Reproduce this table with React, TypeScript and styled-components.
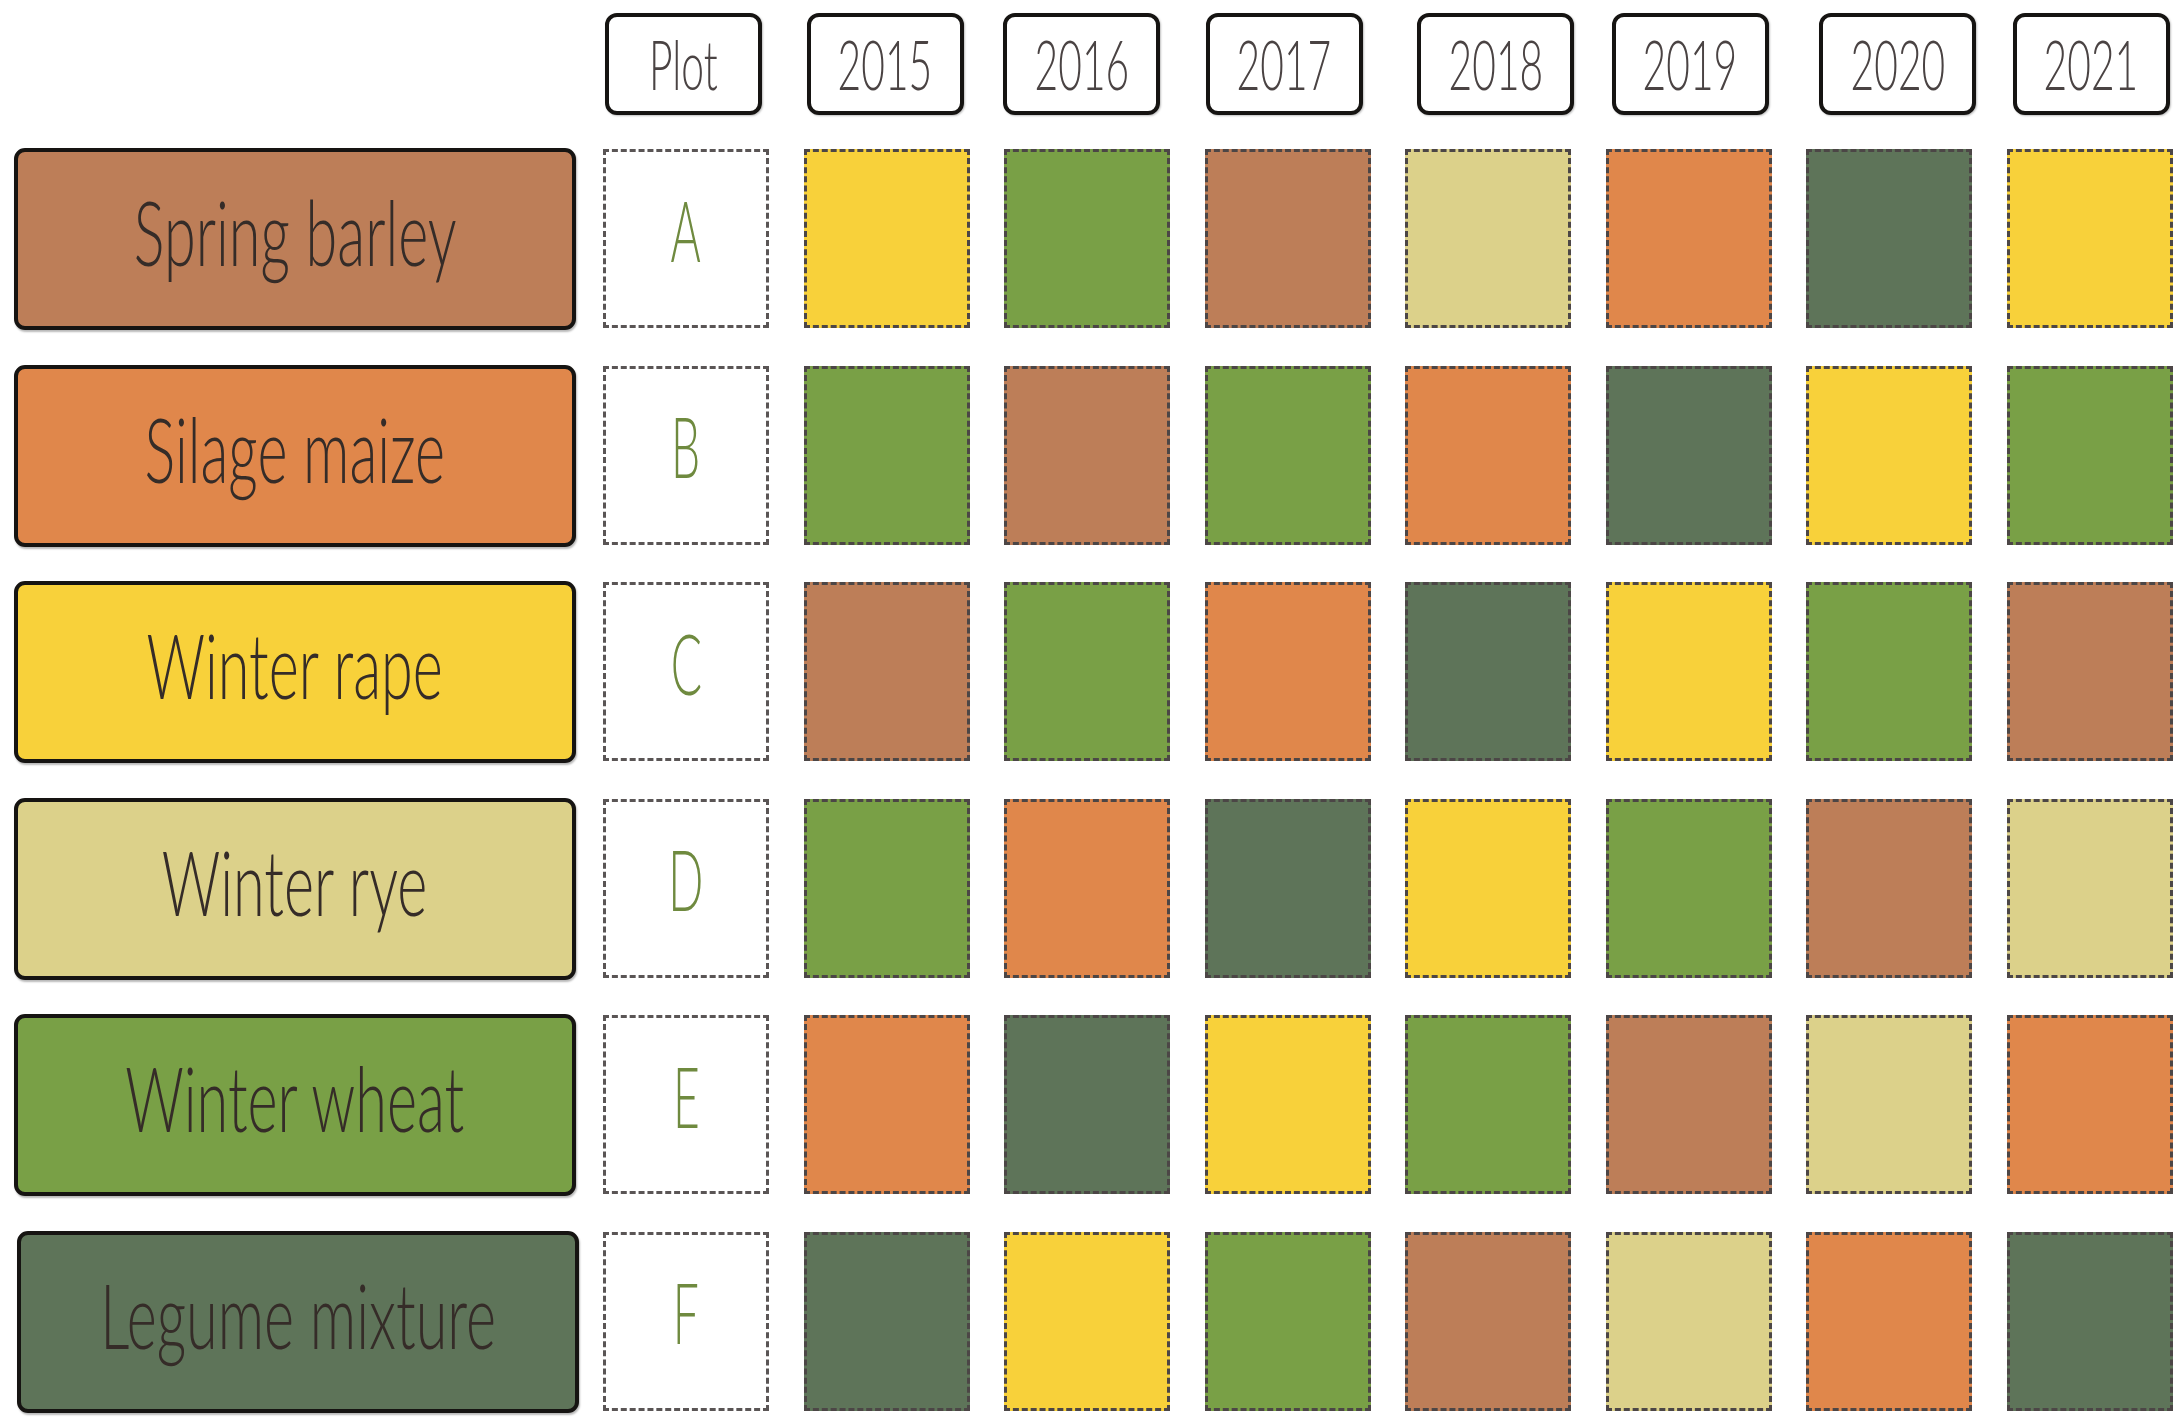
import React from "react";
import styled, { createGlobalStyle } from "styled-components";

const GlobalStyle = createGlobalStyle`
  html, body {
    margin: 0;
    padding: 0;
    background: #ffffff;
  }
  body {
    font-family: "Lato", "Open Sans", sans-serif;
  }
`;

type CropKey = "brown" | "orange" | "yellow" | "pale" | "green" | "dark";

const COLORS: Record<CropKey, string> = {
  brown: "#bd7e58",
  orange: "#e0874b",
  yellow: "#f8d13a",
  pale: "#dcd18a",
  green: "#79a046",
  dark: "#5e7459",
};

const CROPS: { name: string; key: CropKey; shift: number }[] = [
  { name: "Spring barley", key: "brown", shift: 0 },
  { name: "Silage maize", key: "orange", shift: 0 },
  { name: "Winter rape", key: "yellow", shift: 0 },
  { name: "Winter rye", key: "pale", shift: 0 },
  { name: "Winter wheat", key: "green", shift: 0 },
  { name: "Legume mixture", key: "dark", shift: 3 },
];

const HEADERS: { label: string; shift: number }[] = [
  { label: "Plot", shift: 2 },
  { label: "2015", shift: 3 },
  { label: "2016", shift: -1 },
  { label: "2017", shift: 1 },
  { label: "2018", shift: 12 },
  { label: "2019", shift: 6 },
  { label: "2020", shift: 13 },
  { label: "2021", shift: 6 },
];

const PLOTS: { id: string; rotation: CropKey[] }[] = [
  { id: "A", rotation: ["yellow", "green", "brown", "pale", "orange", "dark", "yellow"] },
  { id: "B", rotation: ["green", "brown", "green", "orange", "dark", "yellow", "green"] },
  { id: "C", rotation: ["brown", "green", "orange", "dark", "yellow", "green", "brown"] },
  { id: "D", rotation: ["green", "orange", "dark", "yellow", "green", "brown", "pale"] },
  { id: "E", rotation: ["orange", "dark", "yellow", "green", "brown", "pale", "orange"] },
  { id: "F", rotation: ["dark", "yellow", "green", "brown", "pale", "orange", "dark"] },
];

const ROW_H = 179;
const ROW_GAP = 37.6;
const HEAD_H = 102;
const HEAD_GAP = 34;
const COL_W = 166;
const COL_GAP = 34.5;

const Page = styled.div`
  display: flex;
  align-items: flex-start;
  padding: 13px 0 0 14px;
  width: 2184px;
  height: 1428px;
  box-sizing: border-box;
  overflow: hidden;
`;

const Legend = styled.div`
  display: flex;
  flex-direction: column;
  gap: ${ROW_GAP}px;
  width: 562px;
  padding-top: ${HEAD_H + HEAD_GAP}px;
`;

const CropLabel = styled.div<{ $bg: string; $shift: number }>`
  width: 562px;
  height: ${ROW_H + 3}px;
  margin: -1px 0 -2px ${(p) => p.$shift}px;
  box-sizing: border-box;
  background: ${(p) => p.$bg};
  border: 4px solid #161412;
  border-radius: 11px;
  box-shadow: 1px 2px 2px rgba(0, 0, 0, 0.28);
  display: flex;
  align-items: center;
  justify-content: center;
  overflow: hidden;
`;

const CropName = styled.span`
  display: inline-block;
  font-family: "Lato", sans-serif;
  font-weight: 300;
  font-size: 90px;
  line-height: 1;
  color: #352c28;
  white-space: nowrap;
  transform: translateY(-8px) scaleX(0.64);
`;

const Board = styled.div`
  margin-left: 27px;
  display: flex;
  flex-direction: column;
  gap: ${HEAD_GAP}px;
`;

const HeaderRow = styled.div`
  display: grid;
  grid-template-columns: repeat(8, ${COL_W}px);
  column-gap: ${COL_GAP}px;
  height: ${HEAD_H}px;
`;

const CellGrid = styled.div`
  display: grid;
  grid-template-columns: repeat(8, ${COL_W}px);
  grid-auto-rows: ${ROW_H}px;
  column-gap: ${COL_GAP}px;
  row-gap: ${ROW_GAP}px;
`;

const HeaderBox = styled.div<{ $shift: number }>`
  width: 157px;
  height: ${HEAD_H}px;
  margin-left: ${(p) => p.$shift}px;
  box-sizing: border-box;
  border: 4px solid #161412;
  border-radius: 12px;
  background: #ffffff;
  box-shadow: 1px 1px 2px rgba(0, 0, 0, 0.25);
  display: flex;
  align-items: center;
  justify-content: center;
`;

const HeaderText = styled.span`
  display: inline-block;
  font-family: "Lato", sans-serif;
  font-weight: 300;
  font-size: 68px;
  line-height: 1;
  color: #4a4343;
  transform: scaleX(0.6);
`;

const PlotCell = styled.div`
  box-sizing: border-box;
  border: 3px dashed #5a5555;
  background: #ffffff;
  display: flex;
  align-items: center;
  justify-content: center;
`;

const PlotLetter = styled.span`
  display: inline-block;
  font-family: "Lato", sans-serif;
  font-weight: 300;
  font-size: 84px;
  line-height: 1;
  color: #6f8a3f;
  transform: translateY(-9px) scaleX(0.55);
`;

const CropCell = styled.div<{ $bg: string }>`
  box-sizing: border-box;
  border: 3px dashed #4c4646;
  background: ${(p) => p.$bg};
`;

export default function App() {
  return (
    <>
      <GlobalStyle />
      <Page>
        <Legend>
          {CROPS.map((c) => (
            <CropLabel key={c.name} $bg={COLORS[c.key]} $shift={c.shift}>
              <CropName>{c.name}</CropName>
            </CropLabel>
          ))}
        </Legend>
        <Board>
          <HeaderRow>
            {HEADERS.map((h) => (
              <HeaderBox key={h.label} $shift={h.shift}>
                <HeaderText>{h.label}</HeaderText>
              </HeaderBox>
            ))}
          </HeaderRow>
          <CellGrid>
            {PLOTS.map((p) => (
              <React.Fragment key={p.id}>
                <PlotCell>
                  <PlotLetter>{p.id}</PlotLetter>
                </PlotCell>
                {p.rotation.map((k, i) => (
                  <CropCell key={i} $bg={COLORS[k]} />
                ))}
              </React.Fragment>
            ))}
          </CellGrid>
        </Board>
      </Page>
    </>
  );
}
